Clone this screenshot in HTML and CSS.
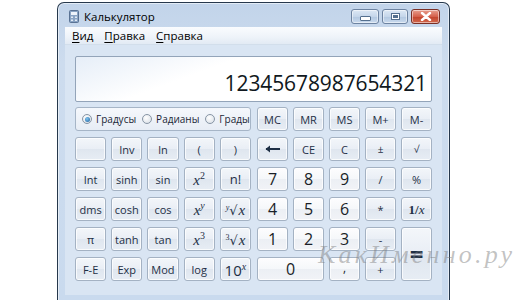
FILE: index.html
```html
<!DOCTYPE html>
<html>
<head>
    <title>Калькулятор</title>
    <link rel="stylesheet" href="styles.css">
</head>
<body>
    <div class="window">
        <div class="titlebar">
            <svg class="app-icon" width="10" height="13" viewBox="0 0 10 13">
                <rect x="0.5" y="0.5" width="9" height="12" rx="1" fill="#8aa4c4" stroke="#5a7394"/>
                <rect x="2" y="2" width="6" height="3" fill="#eef4fb"/>
                <rect x="2" y="6.5" width="2" height="1.5" fill="#e2ebf5"/>
                <rect x="6" y="6.5" width="2" height="1.5" fill="#e2ebf5"/>
                <rect x="2" y="9.5" width="2" height="1.5" fill="#e2ebf5"/>
                <rect x="6" y="9.5" width="2" height="1.5" fill="#e2ebf5"/>
            </svg>
            <span class="title">Калькулятор</span>
            <div class="caption-buttons">
                <div class="cap-btn cap-min"><span class="min-glyph"></span></div>
                <div class="cap-btn cap-max"><span class="max-glyph"></span></div>
                <div class="cap-btn cap-close">
                    <svg width="12" height="9" viewBox="0 0 12 9">
                        <path d="M2 1 L10 8 M10 1 L2 8" stroke="#ffffff" stroke-width="2.4" stroke-linecap="round"/>
                    </svg>
                </div>
            </div>
        </div>

        <div class="client">
            <div class="menubar">
                <span class="menu-item"><u>В</u>ид</span>
                <span class="menu-item"><u>П</u>равка</span>
                <span class="menu-item"><u>С</u>правка</span>
            </div>

            <div class="calc">
                <div class="display">12345678987654321</div>

                <div class="keypad">
                    <div class="keys">
                        <div class="angle">
                            <span class="radio checked"></span><span class="radio-label">Градусы</span>
                            <span class="radio"></span><span class="radio-label">Радианы</span>
                            <span class="radio"></span><span class="radio-label">Грады</span>
                        </div>

                        <div class="key"></div>
                        <div class="key">Inv</div>
                        <div class="key">ln</div>
                        <div class="key">(</div>
                        <div class="key">)</div>

                        <div class="key">Int</div>
                        <div class="key">sinh</div>
                        <div class="key">sin</div>
                        <div class="key math"><span><i>x</i><sup>2</sup></span></div>
                        <div class="key big">n!</div>

                        <div class="key">dms</div>
                        <div class="key">cosh</div>
                        <div class="key">cos</div>
                        <div class="key math"><span><i>x</i><sup><i>y</i></sup></span></div>
                        <div class="key math"><span><sup class="idx"><i>y</i></sup><span class="rad">√</span><i>x</i></span></div>

                        <div class="key">π</div>
                        <div class="key">tanh</div>
                        <div class="key">tan</div>
                        <div class="key math"><span><i>x</i><sup>3</sup></span></div>
                        <div class="key math"><span><sup class="idx">3</sup><span class="rad">√</span><i>x</i></span></div>

                        <div class="key">F-E</div>
                        <div class="key">Exp</div>
                        <div class="key">Mod</div>
                        <div class="key">log</div>
                        <div class="key ten"><span>10<sup><i>x</i></sup></span></div>
                    </div>

                    <div class="keys">
                        <div class="key">MC</div>
                        <div class="key">MR</div>
                        <div class="key">MS</div>
                        <div class="key">M+</div>
                        <div class="key">M-</div>

                        <div class="key">
                            <svg width="16" height="8" viewBox="0 0 16 8">
                                <path d="M1 4 H15" stroke="#1e2f45" stroke-width="2"/>
                                <path d="M0.5 4 L5 0.5 L5 7.5 Z" fill="#1e2f45"/>
                            </svg>
                        </div>
                        <div class="key">CE</div>
                        <div class="key">C</div>
                        <div class="key small">±</div>
                        <div class="key small">√</div>

                        <div class="key num">7</div>
                        <div class="key num">8</div>
                        <div class="key num">9</div>
                        <div class="key">/</div>
                        <div class="key">%</div>

                        <div class="key num">4</div>
                        <div class="key num">5</div>
                        <div class="key num">6</div>
                        <div class="key">*</div>
                        <div class="key inv"><span>1/<i>x</i></span></div>

                        <div class="key num">1</div>
                        <div class="key num">2</div>
                        <div class="key num">3</div>
                        <div class="key">-</div>
                        <div class="key equals">=</div>

                        <div class="key num zero">0</div>
                        <div class="key num comma">,</div>
                        <div class="key">+</div>
                    </div>
                </div>
            </div>
        </div>
    </div>

    <div class="watermark">КакИменно.ру</div>
</body>
</html>
```

FILE: styles.css
```css
body {
    margin: 0;
    width: 520px;
    height: 300px;
    background: #ffffff;
    font-family: "Open Sans", "Noto Sans", sans-serif;
    position: relative;
    overflow: hidden;
}

.window {
    margin: 2px 0 0 57px;
    width: 391px;
    height: 292px;
    border: 1px solid #26384c;
    border-bottom-color: #1b2735;
    border-radius: 7px 7px 0 0;
    background: linear-gradient(#c2d4ea, #cddcee 60px, #c9daee);
    box-shadow: inset 0 0 0 1px rgba(255, 255, 255, 0.55);
    display: flex;
    flex-direction: column;
    padding-bottom: 6px;
    box-sizing: content-box;
}

/* title bar */
.titlebar {
    height: 24px;
    display: flex;
    align-items: center;
    padding: 3px 9px 0 11px;
    box-sizing: border-box;
}

.app-icon {
    flex: none;
}

.title {
    margin-left: 5px;
    font-size: 11.5px;
    color: #000000;
}

.caption-buttons {
    margin-left: auto;
    display: flex;
    gap: 3px;
}

.cap-btn {
    height: 15px;
    border: 1px solid #6d83a1;
    border-radius: 3px;
    box-sizing: border-box;
    display: flex;
    align-items: center;
    justify-content: center;
    background: linear-gradient(#dde8f5, #c5d6ea 50%, #b2c7e0 51%, #c9daee);
    box-shadow: inset 0 0 0 1px rgba(255, 255, 255, 0.5);
}

.cap-min {
    width: 28px;
}

.cap-max {
    width: 26px;
}

.cap-close {
    width: 29px;
    border-color: #7a2f25;
    background: linear-gradient(#e8a08f, #d5614c 50%, #c2432c 51%, #d2684d);
}

.min-glyph {
    width: 9px;
    height: 3px;
    margin-top: 4px;
    background: #ffffff;
    border: 1px solid #55708f;
    border-radius: 1px;
}

.max-glyph {
    width: 7px;
    height: 5px;
    border: 1px solid #55708f;
    box-shadow: inset 0 0 0 1px #ffffff;
    background: #55708f;
}

/* client area */
.client {
    flex: 1;
    margin: 0 7px;
    display: flex;
    flex-direction: column;
    background: #d9e5f3;
}

.menubar {
    height: 18px;
    display: flex;
    align-items: center;
    padding-left: 3px;
    background: linear-gradient(#fafcfe, #eef3f9 60%, #e2eaf4);
    border-bottom: 1px solid #d2deeb;
    box-sizing: border-box;
    font-size: 11.5px;
    color: #000000;
}

.menu-item {
    padding: 0 4px;
    margin-right: 3px;
}

.menu-item u {
    text-decoration-thickness: 1px;
    text-underline-offset: 2px;
}

.calc {
    flex: 1;
    padding: 11px 10px 8px;
    display: flex;
    flex-direction: column;
    gap: 5px;
}

.display {
    height: 46px;
    box-sizing: border-box;
    border: 1px solid #93a4b9;
    border-radius: 2px;
    background: linear-gradient(160deg, #e6eef8, #ffffff 35%, #ffffff);
    display: flex;
    align-items: flex-end;
    justify-content: flex-end;
    padding: 0 4px 4px 0;
    font-size: 21px;
    color: #101820;
    letter-spacing: -0.1px;
}

.keypad {
    display: flex;
    gap: 6px;
}

.keys {
    flex: 1;
    display: grid;
    grid-template-columns: repeat(5, 1fr);
    grid-template-rows: repeat(6, 24px);
    gap: 6px 5px;
}

.keys:first-child {
    flex: 0 0 176px;
}

.angle {
    grid-column: span 5;
    border: 1px solid #a6b5c7;
    border-radius: 3px;
    background: linear-gradient(#f5f8fc, #e7edf5);
    display: flex;
    align-items: center;
    padding-left: 6px;
    font-size: 10px;
    color: #1a2636;
    white-space: nowrap;
}

.radio {
    width: 10px;
    height: 10px;
    box-sizing: border-box;
    border: 1px solid #8795a5;
    border-radius: 50%;
    background: radial-gradient(circle at 40% 35%, #ffffff, #d5dce4);
    flex: none;
    display: flex;
    align-items: center;
    justify-content: center;
}

.radio.checked::after {
    content: "";
    width: 5px;
    height: 5px;
    border-radius: 50%;
    background: radial-gradient(circle at 40% 35%, #7fc4f0, #1d5f9c);
}

.radio-label {
    margin: 0 6px 0 4px;
}

.key {
    border: 1px solid #a4b2c3;
    border-radius: 3px;
    background: linear-gradient(#f3f6fa, #e9eef5 50%, #dfe6ef 51%, #e7edf4);
    box-shadow: inset 0 0 0 1px rgba(255, 255, 255, 0.75);
    display: flex;
    align-items: center;
    justify-content: center;
    font-size: 11px;
    color: #1e2f45;
    line-height: 1;
}

.key.num {
    background: linear-gradient(#fdfdfe, #f5f7fa 50%, #eceff4 51%, #f1f3f7);
    font-size: 16px;
    color: #1a1f28;
}

.key.big {
    font-size: 13px;
}

.key.small {
    font-size: 10px;
}

.key.math {
    font-family: "Liberation Serif", serif;
    font-size: 15px;
    padding-top: 2px;
}

.key sup {
    font-size: 10px;
    line-height: 0;
    vertical-align: 6px;
}

.key .idx {
    font-size: 8px;
    vertical-align: 5px;
}

.key .rad {
    font-family: "DejaVu Sans", sans-serif;
    font-size: 13px;
    margin-right: 1px;
}

.key.ten {
    font-size: 15px;
    padding-top: 2px;
}

.key.ten sup {
    font-family: "Liberation Serif", serif;
    font-size: 10px;
}

.key.inv {
    font-family: "Liberation Serif", serif;
    font-size: 13px;
    font-weight: bold;
}

.key.inv i {
    font-weight: normal;
}

.key.equals {
    grid-row: span 2;
    font-size: 24px;
    font-weight: bold;
}

.key.zero {
    grid-column: span 2;
}

.key.comma {
    align-items: flex-end;
    padding-bottom: 6px;
    font-size: 12px;
}

.watermark {
    position: absolute;
    left: 318px;
    top: 240px;
    font-family: "Liberation Serif", serif;
    font-style: italic;
    font-size: 26px;
    line-height: 30px;
    letter-spacing: 3.2px;
    color: rgba(120, 120, 120, 0.45);
}
```
